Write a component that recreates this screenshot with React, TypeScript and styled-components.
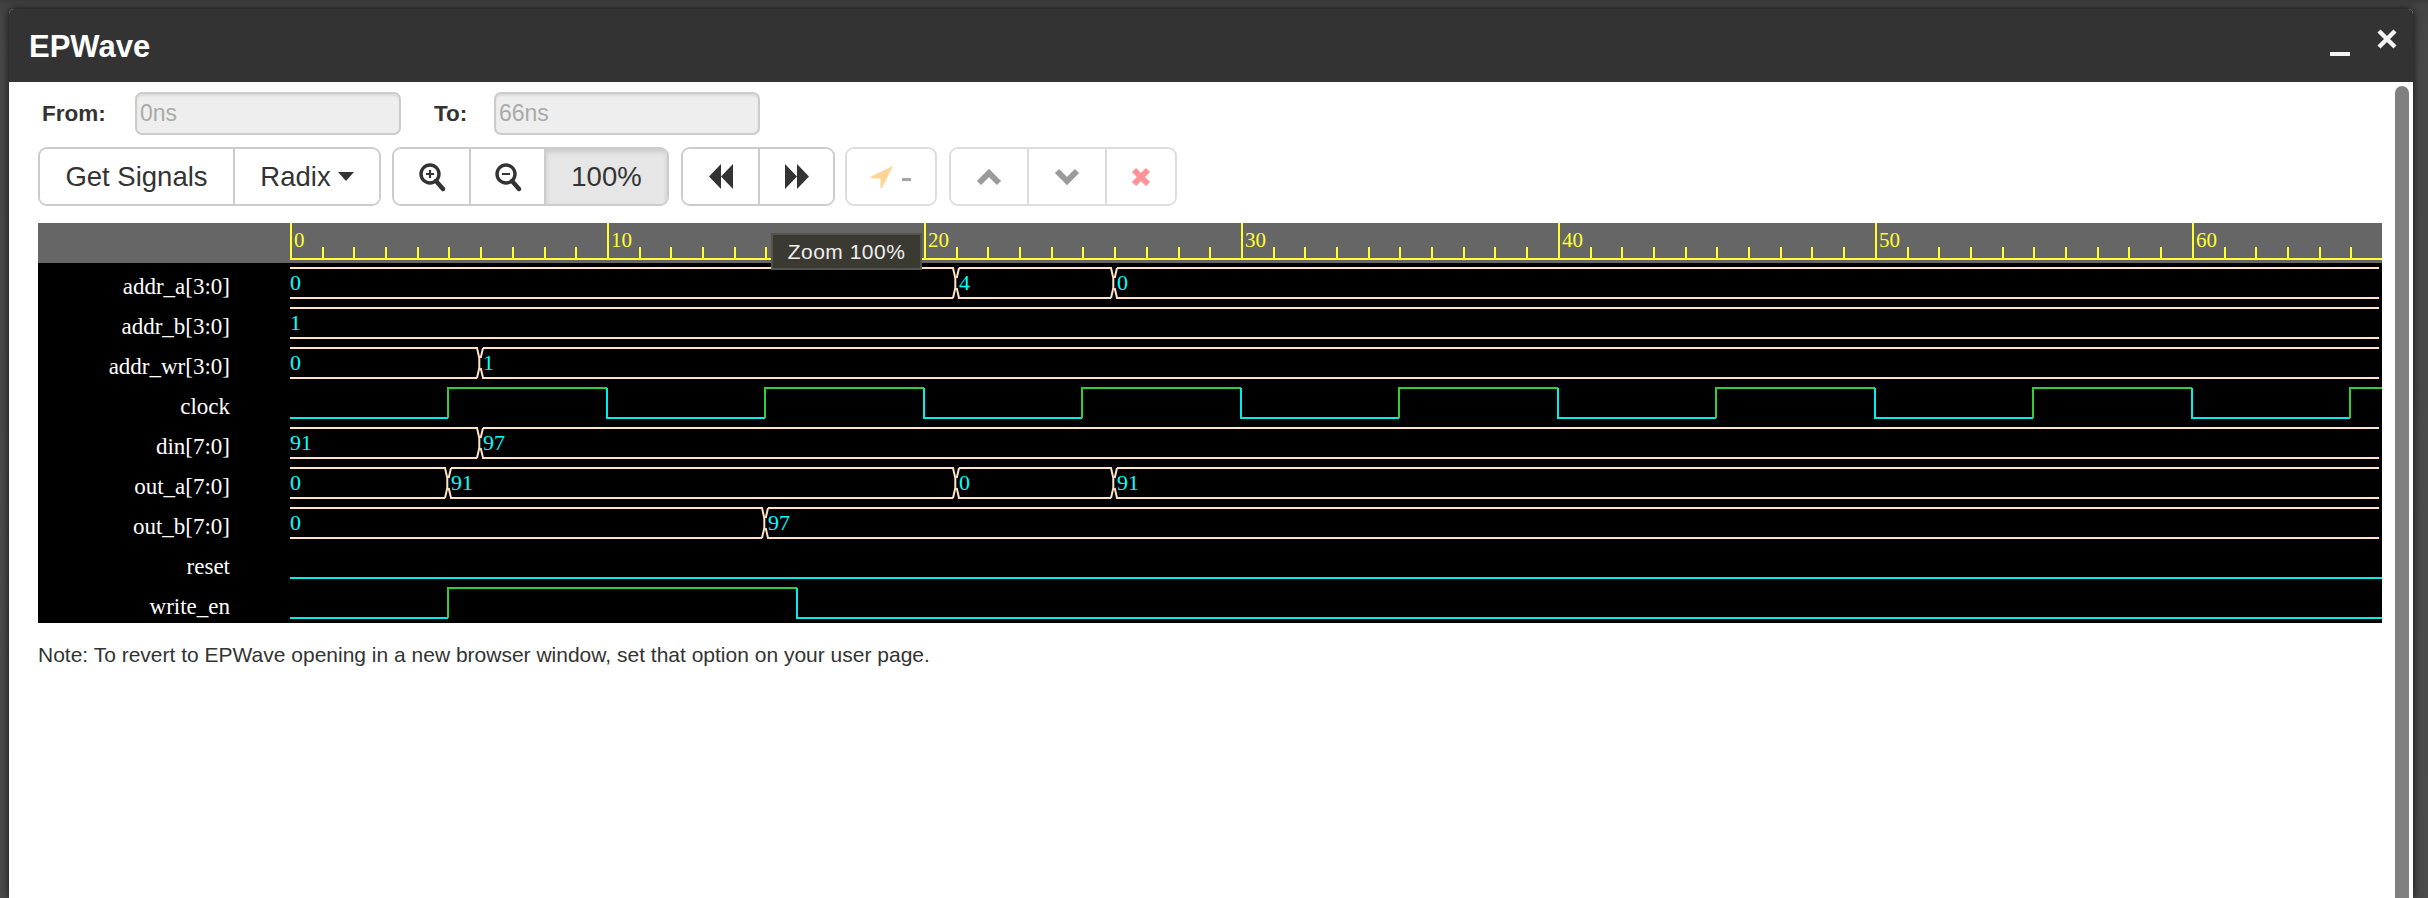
import React from "react";
import styled, { createGlobalStyle } from "styled-components";

const GlobalStyle = createGlobalStyle`
    html, body {
        margin: 0;
        padding: 0;
        background: #484848;
        font-family: "Liberation Sans", Arial, sans-serif;
    }
`;

const PX_PER_NS = 2092 / 66;
const TOTAL_NS = 66;
const toX = (t: number) => Math.round(t * PX_PER_NS);

const Backdrop = styled.div`
    width: 2428px;
    height: 898px;
    overflow: hidden;
    box-sizing: border-box;
    padding: 9px 15px 0 9px;
    background: linear-gradient(#3a3a3a 0, #444 6px, #484848 60px, #4b4b4b 100%);
`;

const Dialog = styled.div`
    position: relative;
    height: 889px;
    background: #fff;
    border-radius: 5px 5px 0 0;
    box-shadow: 0 0 9px rgba(0, 0, 0, 0.75);
    overflow: hidden;
`;

const TitleBar = styled.div`
    height: 73px;
    background: #333;
    display: flex;
    align-items: center;
    justify-content: space-between;
    padding: 0 15px 0 20px;
`;

const Title = styled.div`
    color: #fff;
    font-size: 31px;
    font-weight: 700;
    margin-top: 2px;
`;

const WindowButtons = styled.div`
    display: flex;
    align-items: flex-start;
    gap: 25px;
    margin-bottom: 6px;
`;

const Content = styled.div`
    padding: 10px 0 0 29px;
`;

const RangeRow = styled.div`
    display: flex;
    align-items: center;
    height: 43px;
    padding-left: 4px;
`;

const RangeLabel = styled.label<{ $width: number }>`
    width: ${(p) => p.$width}px;
    font-size: 22.5px;
    font-weight: 700;
    color: #333;
`;

const RangeInput = styled.input`
    width: 266px;
    height: 43px;
    box-sizing: border-box;
    margin-right: 33px;
    padding: 0 3px;
    background: #eee;
    border: 2px solid #ccc;
    border-radius: 7px;
    box-shadow: inset 0 2px 2px rgba(0, 0, 0, 0.08);
    font-family: inherit;
    font-size: 23px;
    color: #aaa;
`;

const Toolbar = styled.div`
    display: flex;
    margin-top: 12px;
`;

const ButtonGroup = styled.div<{ $gap: number; $faded?: boolean }>`
    display: flex;
    height: 59px;
    box-sizing: border-box;
    margin-right: ${(p) => p.$gap}px;
    border: 2px solid #ccc;
    border-radius: 9px;
    overflow: hidden;
    opacity: ${(p) => (p.$faded ? 0.65 : 1)};
`;

const ToolButton = styled.div<{ $width: number; $active?: boolean }>`
    width: ${(p) => p.$width}px;
    box-sizing: border-box;
    display: flex;
    align-items: center;
    justify-content: center;
    gap: 7px;
    font-size: 27.5px;
    color: #333;
    background: ${(p) => (p.$active ? "#e6e6e6" : "#fff")};
    box-shadow: ${(p) => (p.$active ? "inset 0 3px 5px rgba(0, 0, 0, 0.125)" : "none")};
    & + & {
        border-left: 2px solid #ccc;
    }
`;

const Caret = styled.span`
    width: 0;
    height: 0;
    border-left: 8px solid transparent;
    border-right: 8px solid transparent;
    border-top: 9px solid #333;
`;

const Dash = styled.span`
    width: 9px;
    height: 3px;
    margin-left: 2px;
    margin-top: 6px;
    background: #777;
`;

const WavePanel = styled.div`
    position: relative;
    width: 2344px;
    margin-top: 17px;
    background: #000;
`;

const RulerRow = styled.div`
    height: 40px;
    background: #666;
    padding-left: 252px;
    svg {
        display: block;
    }
`;

const SignalRow = styled.div`
    display: flex;
    height: 40px;
    svg {
        display: block;
    }
`;

const SignalName = styled.div`
    width: 192px;
    margin-right: 60px;
    text-align: right;
    color: #fff;
    font-family: "Liberation Serif", "Times New Roman", serif;
    font-size: 23px;
    line-height: 40px;
    padding-top: 4px;
    box-sizing: border-box;
`;

const ZoomTip = styled.div`
    position: absolute;
    left: 733px;
    top: 10px;
    width: 151px;
    height: 37px;
    box-sizing: border-box;
    display: flex;
    align-items: center;
    justify-content: center;
    background: #3b3a32;
    border: 2px solid #55544c;
    color: #eee;
    font-size: 21px;
    letter-spacing: 0.5px;
`;

const Note = styled.p`
    margin: 18px 0 0;
    font-size: 21px;
    line-height: 28px;
    color: #333;
`;

const ScrollThumb = styled.div`
    position: absolute;
    top: 77px;
    right: 4px;
    bottom: -10px;
    width: 14px;
    border-radius: 7px;
    background: #808080;
`;

const BUS = "#ffe4c4";
const LOW = "#00eeee";
const HIGH = "#33cc33";

type BusSignal = { name: string; kind: "bus"; values: [number, string][] };
type BitSignal = { name: string; kind: "bit"; edges: number[] };
type Signal = BusSignal | BitSignal;

const clockEdges: number[] = [];
for (let t = 5; t < TOTAL_NS; t += 5) clockEdges.push(t);

const signals: Signal[] = [
    { name: "addr_a[3:0]", kind: "bus", values: [[0, "0"], [21, "4"], [26, "0"]] },
    { name: "addr_b[3:0]", kind: "bus", values: [[0, "1"]] },
    { name: "addr_wr[3:0]", kind: "bus", values: [[0, "0"], [6, "1"]] },
    { name: "clock", kind: "bit", edges: clockEdges },
    { name: "din[7:0]", kind: "bus", values: [[0, "91"], [6, "97"]] },
    { name: "out_a[7:0]", kind: "bus", values: [[0, "0"], [5, "91"], [21, "0"], [26, "91"]] },
    { name: "out_b[7:0]", kind: "bus", values: [[0, "0"], [15, "97"]] },
    { name: "reset", kind: "bit", edges: [] },
    { name: "write_en", kind: "bit", edges: [5, 16] },
];

const Ruler = () => {
    const ticks = [];
    for (let t = 0; t <= TOTAL_NS; t++) {
        const x = toX(t);
        const major = t % 10 === 0;
        ticks.push(
            <line key={t} x1={x + 1} x2={x + 1} y1={major ? 0 : 24} y2={36} stroke="#ffff33" strokeWidth={2} />
        );
        if (major) {
            ticks.push(
                <text key={`l${t}`} x={x + 4} y={24} fill="#ffff33" fontSize={21} fontFamily="'Liberation Serif', serif">
                    {t}
                </text>
            );
        }
    }
    return (
        <svg width={2092} height={40}>
            <line x1={0} x2={2092} y1={36} y2={36} stroke="#ffff33" strokeWidth={2} />
            {ticks}
        </svg>
    );
};

const BusTrace = ({ values }: { values: [number, string][] }) => {
    const changes = values.slice(1).map(([t]) => toX(t));
    const stops = [0, ...changes, 2092];
    const parts = [];
    for (let i = 0; i < stops.length - 1; i++) {
        const a = stops[i];
        const b = stops[i + 1];
        const open = i === 0 ? `M${a} 5H${b - 3}` : `M${a + 3} 5H${b - 3}`;
        const close = i === stops.length - 2 ? "" : `L${b - 0.7} 15V25L${b - 3} 35`;
        const back = i === 0 ? `M${a} 35H${b - 3}` : `M${a - 0.7 + 1.4} 15L${a + 3} 5M${a + 0.7} 25L${a + 3} 35H${b - 3}`;
        parts.push(<path key={i} d={`${open}${close}${back}`} fill="none" stroke={BUS} strokeWidth={2} />);
    }
    return (
        <svg width={2092} height={40}>
            {parts}
            {values.map(([t, v]) => (
                <text key={t} x={t === 0 ? 0 : toX(t) + 3} y={27} fill="#00ffff" fontSize={22} fontFamily="'Liberation Serif', serif">
                    {v}
                </text>
            ))}
        </svg>
    );
};

const BitTrace = ({ edges }: { edges: number[] }) => {
    const stops = [0, ...edges.map(toX), 2092];
    const parts = [];
    for (let i = 0; i < stops.length - 1; i++) {
        const high = i % 2 === 1;
        const a = stops[i];
        const b = stops[i + 1];
        const y = high ? 5 : 35;
        const from = i === 0 ? "" : `M${a} ${high ? 35 : 5}V${y}`;
        parts.push(
            <path key={i} d={`${from || `M${a} ${y}`}H${b}`} fill="none" stroke={high ? HIGH : LOW} strokeWidth={2} />
        );
    }
    return <svg width={2092} height={40}>{parts}</svg>;
};

const ZoomIcon = ({ minus }: { minus?: boolean }) => (
    <svg width={28} height={30} viewBox="0 0 28 30">
        <circle cx={12} cy={12} r={9} fill="none" stroke="#333" strokeWidth={3.4} />
        <path d="M18 19l7 8" stroke="#333" strokeWidth={4.4} strokeLinecap="round" />
        <path d={minus ? "M8 12h8" : "M8 12h8M12 8v8"} stroke="#333" strokeWidth={2.2} />
    </svg>
);

const SkipIcon = ({ back }: { back?: boolean }) => (
    <svg width={24} height={25} viewBox="0 0 24 25">
        <path d={back ? "M12 0v25L0 12.500zM24 0v25L12 12.500z" : "M0 0v25l12-12.500zM12 0v25l12-12.500z"} fill="#333" />
    </svg>
);

const ArrowIcon = () => (
    <svg width={22} height={22} viewBox="0 0 22 22">
        <path d="M22 0L11 22l-1.500 0V12.500L0 12.500V10.500z" fill="#ffbf60" />
    </svg>
);

const ChevronIcon = ({ up }: { up?: boolean }) => (
    <svg width={26} height={18} viewBox="0 0 26 18">
        <path d={up ? "M3 15L13 5l10 10" : "M3 3l10 10L23 3"} fill="none" stroke="#666" strokeWidth={6} />
    </svg>
);

const CrossIcon = () => (
    <svg width={20} height={20} viewBox="0 0 20 20">
        <path d="M3 3l14 14M17 3L3 17" fill="none" stroke="#ff5a60" strokeWidth={6} />
    </svg>
);

const App = () => {
    return (
        <>
            <GlobalStyle />
            <Backdrop>
                <Dialog>
                    <TitleBar>
                        <Title>EPWave</Title>
                        <WindowButtons>
                            <svg width={22} height={30} viewBox="0 0 22 30">
                                <path d="M1 26h20" stroke="#f4f4f4" strokeWidth={4} />
                            </svg>
                            <svg width={22} height={22} viewBox="0 0 22 22">
                                <path d="M3 3l16 16M19 3L3 19" stroke="#f4f4f4" strokeWidth={4.4} />
                            </svg>
                        </WindowButtons>
                    </TitleBar>
                    <Content>
                        <RangeRow>
                            <RangeLabel $width={93}>From:</RangeLabel>
                            <RangeInput value="0ns" disabled readOnly />
                            <RangeLabel $width={60}>To:</RangeLabel>
                            <RangeInput value="66ns" disabled readOnly />
                        </RangeRow>
                        <Toolbar>
                            <ButtonGroup $gap={11}>
                                <ToolButton $width={193}>Get Signals</ToolButton>
                                <ToolButton $width={146}>
                                    Radix <Caret />
                                </ToolButton>
                            </ButtonGroup>
                            <ButtonGroup $gap={12}>
                                <ToolButton $width={75}><ZoomIcon /></ToolButton>
                                <ToolButton $width={75}><ZoomIcon minus /></ToolButton>
                                <ToolButton $width={123} $active>100%</ToolButton>
                            </ButtonGroup>
                            <ButtonGroup $gap={10}>
                                <ToolButton $width={75}><SkipIcon back /></ToolButton>
                                <ToolButton $width={75}><SkipIcon /></ToolButton>
                            </ButtonGroup>
                            <ButtonGroup $gap={12} $faded>
                                <ToolButton $width={88}><ArrowIcon /><Dash /></ToolButton>
                            </ButtonGroup>
                            <ButtonGroup $gap={0} $faded>
                                <ToolButton $width={76}><ChevronIcon up /></ToolButton>
                                <ToolButton $width={78}><ChevronIcon /></ToolButton>
                                <ToolButton $width={70}><CrossIcon /></ToolButton>
                            </ButtonGroup>
                        </Toolbar>
                        <WavePanel>
                            <RulerRow>
                                <Ruler />
                            </RulerRow>
                            {signals.map((s) => (
                                <SignalRow key={s.name}>
                                    <SignalName>{s.name}</SignalName>
                                    {s.kind === "bus" ? <BusTrace values={s.values} /> : <BitTrace edges={s.edges} />}
                                </SignalRow>
                            ))}
                            <ZoomTip>Zoom 100%</ZoomTip>
                        </WavePanel>
                        <Note>Note: To revert to EPWave opening in a new browser window, set that option on your user page.</Note>
                    </Content>
                    <ScrollThumb />
                </Dialog>
            </Backdrop>
        </>
    );
};

export default App;
